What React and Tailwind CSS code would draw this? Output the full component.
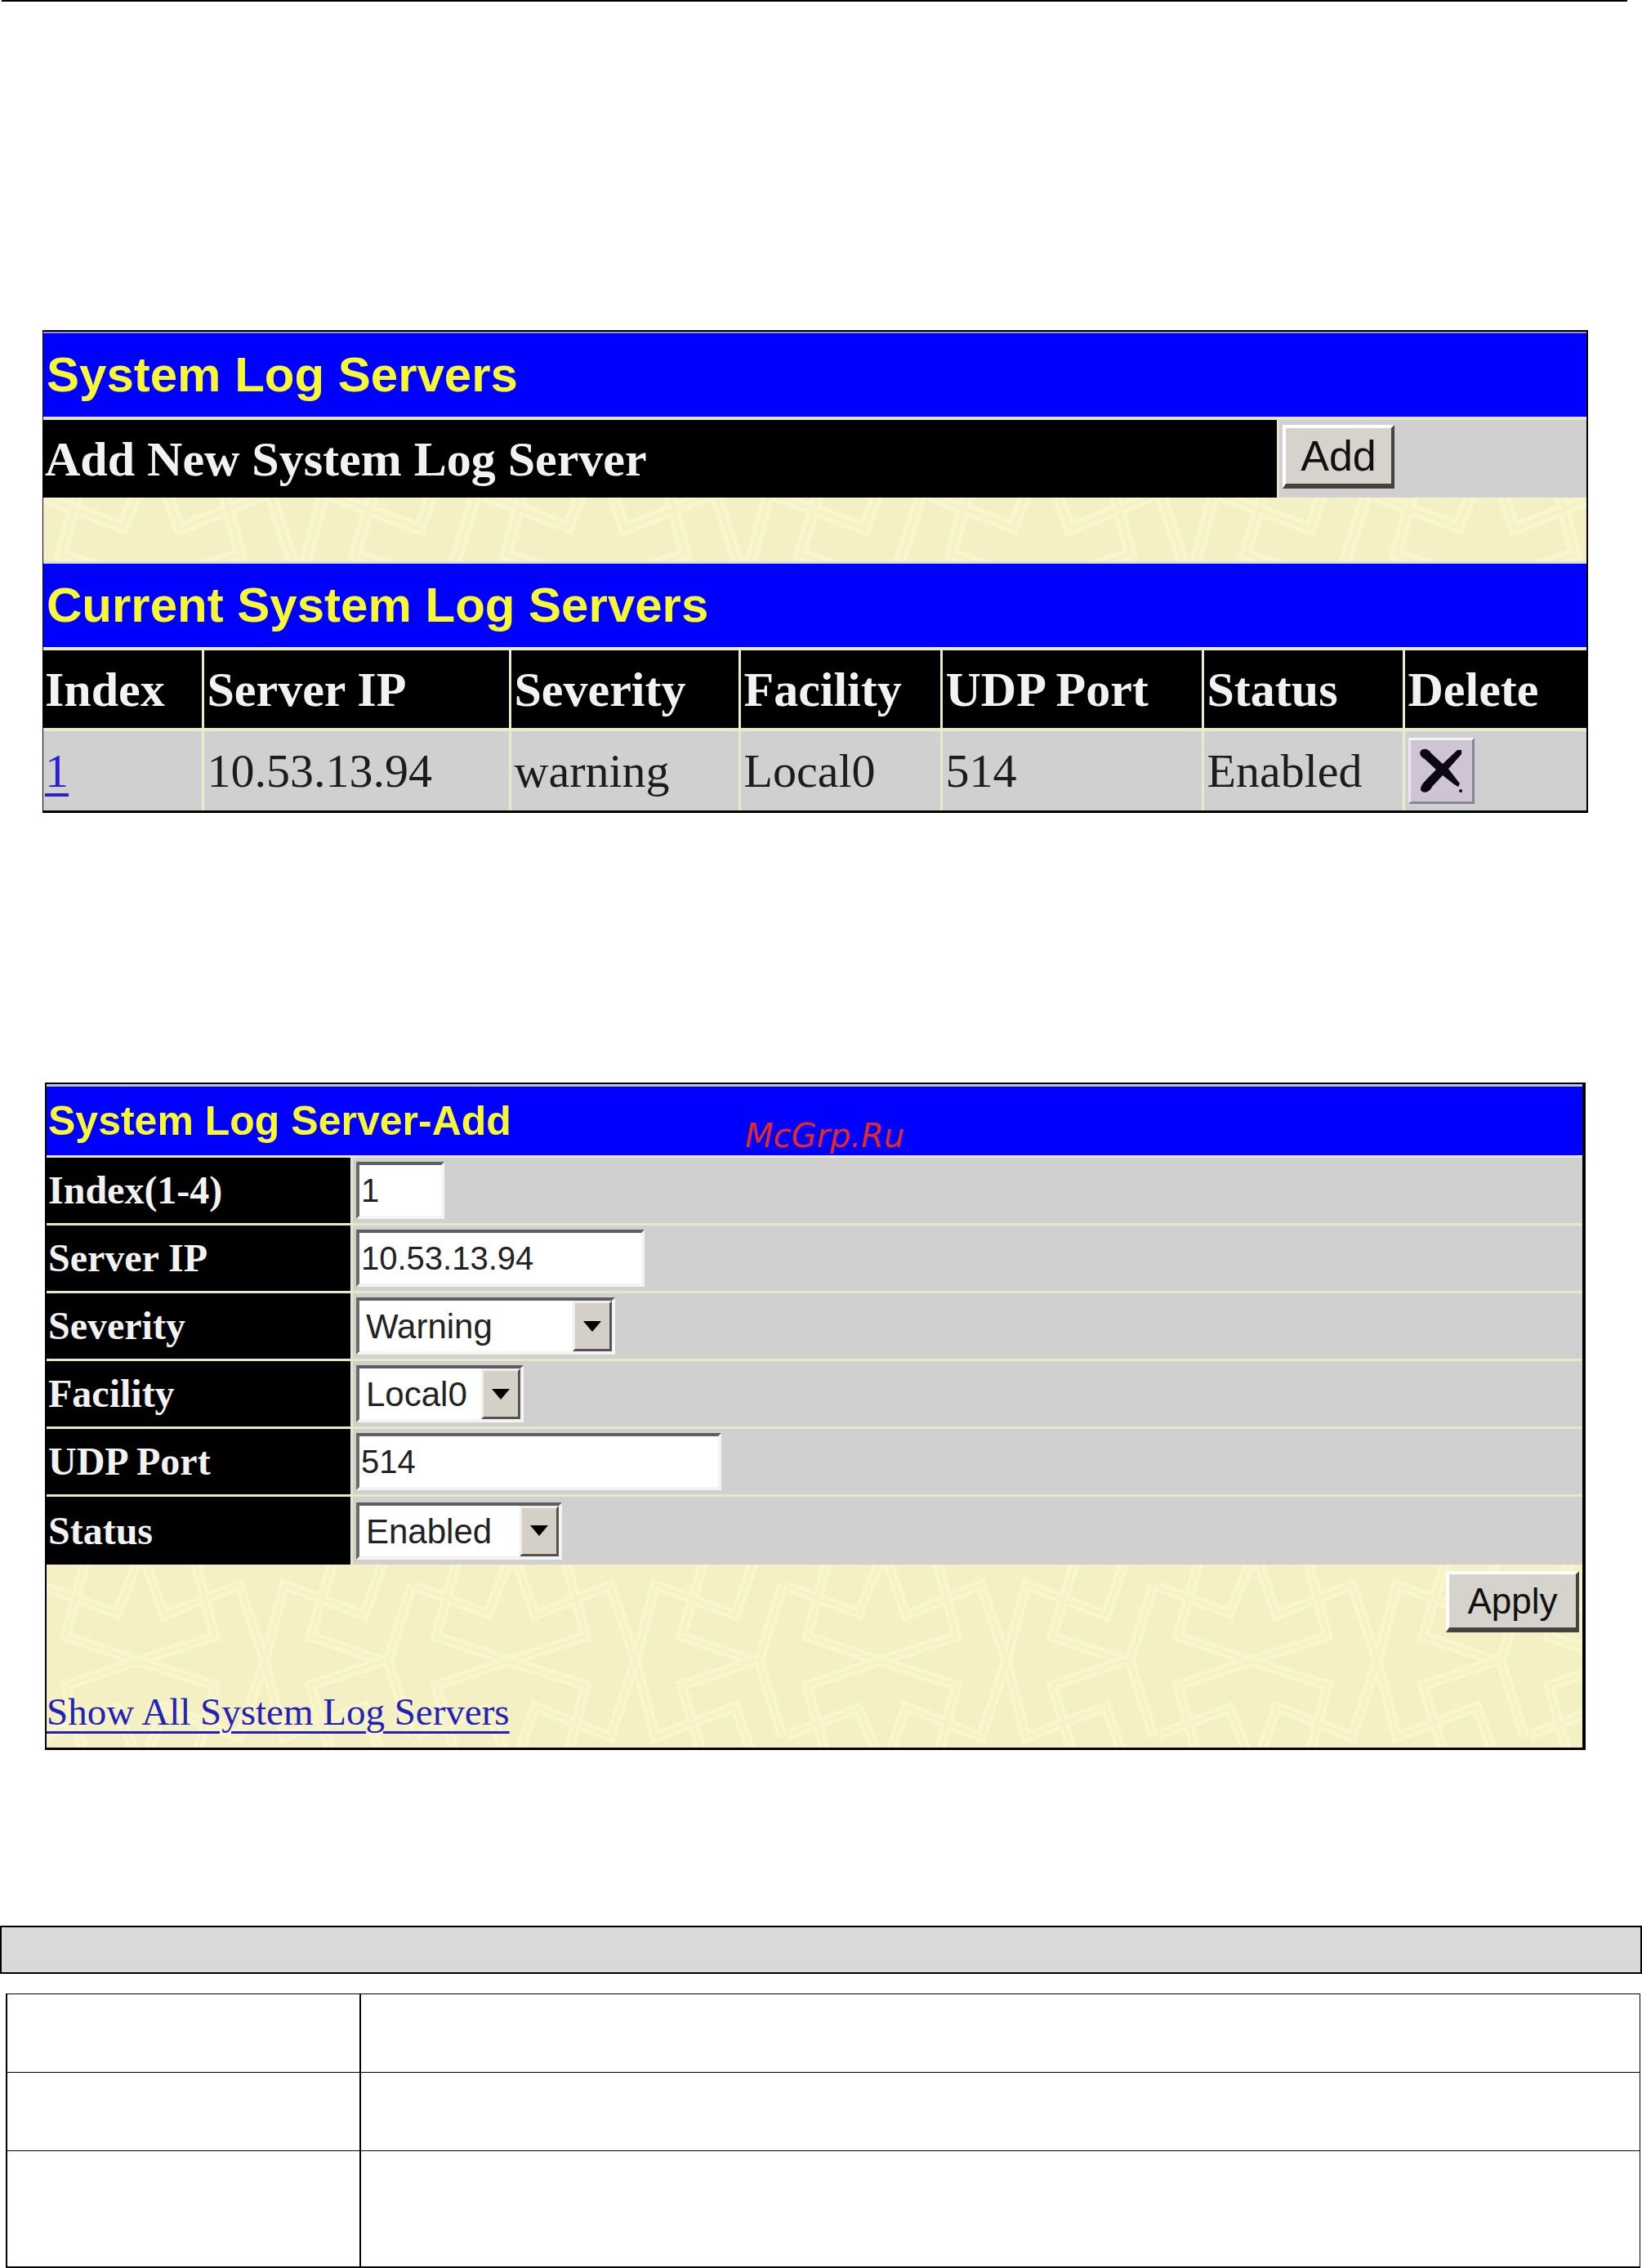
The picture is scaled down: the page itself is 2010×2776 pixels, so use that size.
import { useId, useState } from 'react'
import clsx from 'clsx'

const SERIF = "font-['Liberation_Serif','Times_New_Roman',serif]"
const SANS = "font-['Liberation_Sans',Arial,sans-serif]"

const servers = [
  {
    index: 1,
    ip: '10.53.13.94',
    severity: 'warning',
    facility: 'Local0',
    port: 514,
    status: 'Enabled',
  },
]

const columns = [
  { name: 'Index', width: 'w-[195px]' },
  { name: 'Server IP', width: 'w-[376px]' },
  { name: 'Severity', width: 'w-[281px]' },
  { name: 'Facility', width: 'w-[247px]' },
  { name: 'UDP Port', width: 'w-[320px]' },
  { name: 'Status', width: 'w-[246px]' },
  { name: 'Delete', width: 'w-[224px]' },
]

// upper half of one wallpaper tile, the lower half is its mirror
const tileLines = [
  'M-7 25 L86 60 L112 -4',
  'M121 -4 L144 62 L236 25 L267 118',
  'M267 118 L291 25 L389 62 L412 -4',
  'M182 -4 L206 88 L112 118 L23 88 L48 -4',
  'M351 -4 L323 88 L412 118',
  'M447 25 L418 118',
]

function Wallpaper({ transform }) {
  const id = useId()

  const lines = tileLines.map(d => <path key={d} d={d} />)
  const half = (
    <>
      <g stroke="#faf6cb" strokeWidth="13">{lines}</g>
      <g stroke="#f6f1c6" strokeWidth="4">{lines}</g>
    </>
  )

  return (
    <svg className="absolute inset-0 size-full" aria-hidden="true">
      <defs>
        <pattern
          id={id}
          width="454"
          height="236"
          patternUnits="userSpaceOnUse"
          patternTransform={transform}
        >
          <rect width="454" height="236" fill="#f5f0c4" />
          <g fill="none" strokeLinejoin="miter">
            {half}
            <g transform="translate(0 236) scale(1 -1)">{half}</g>
          </g>
        </pattern>
      </defs>
      <rect width="100%" height="100%" fill={`url(#${id})`} />
    </svg>
  )
}

function RaisedButton({ className, children }) {
  return (
    <button
      type="button"
      className={clsx(
        'border-4 border-b-[6px] border-t-white border-l-white border-r-[#45433f] border-b-[#45433f] bg-[#d6d3cc] leading-none text-[#111]',
        SANS,
        className
      )}
    >
      {children}
    </button>
  )
}

const sunken =
  'h-[70px] border-4 border-t-[#5e5e5e] border-l-[#6a6a6a] border-r-[#f4f4f2] border-b-[#f4f4f2] bg-white text-[#222] rounded-none outline-none'

function TextField({ id, value, onChange, width }) {
  return (
    <input
      id={id}
      type="text"
      value={value}
      onChange={e => onChange(e.target.value)}
      className={clsx('block px-0.5 text-[40px]', sunken, SANS, width)}
    />
  )
}

function SelectField({ id, value, onChange, options, width }) {
  return (
    <div className={clsx('relative', width)}>
      <select
        id={id}
        value={value}
        onChange={e => onChange(e.target.value)}
        className={clsx('block w-full appearance-none pl-2 text-[42px]', sunken, SANS)}
      >
        {options.map(o => (
          <option key={o}>{o}</option>
        ))}
      </select>
      <span className="pointer-events-none absolute top-1 right-1 bottom-1 flex w-12 items-center justify-center border-3 border-t-[#f0eee8] border-l-[#f0eee8] border-r-[#55534e] border-b-[#55534e] bg-[#d4d0c8]">
        <svg width="22" height="13" viewBox="0 0 22 13" aria-hidden="true">
          <path d="M0 0 H22 L11 13 Z" fill="#000" />
        </svg>
      </span>
    </div>
  )
}

function FormRow({ id, label, last, children }) {
  return (
    <div
      className={clsx(
        'flex h-[83px] bg-[#d0d0d0]',
        !last && 'border-b-3 border-[#e9e8c6]'
      )}
    >
      <label
        htmlFor={id}
        className="flex w-[375px] shrink-0 items-center border-r-3 border-[#e9e8c6] bg-black pl-0.5 text-5xl font-bold text-[#f2f2f2]"
      >
        {label}
      </label>
      <div className="flex items-center pl-1">{children}</div>
    </div>
  )
}

function ServerList() {
  return (
    <section className="border-2 border-b-3 border-l-1 border-black bg-[#f5f0c4]">
      <h2
        className={clsx(
          'flex h-[104px] items-center border-t-2 border-[#8f8fd8] bg-[#0000ff] pl-1 text-[60px] font-bold text-[#f7f732]',
          SANS
        )}
      >
        System Log Servers
      </h2>

      <div className="flex h-[99px] border-t-4 border-[#e8e2cc] bg-[#d0d0d0]">
        <p className="flex flex-1 items-center bg-black pl-0.5 text-[60px] font-bold text-[#f2f2f2]">
          Add New System Log Server
        </p>
        <div className="w-[379px] border-l-3 border-[#e8e2cc] pt-1.5 pl-1">
          <RaisedButton className="h-[78px] w-[137px] text-[52px]">
            Add
          </RaisedButton>
        </div>
      </div>

      <div className="relative h-[78px]">
        <Wallpaper transform="translate(-6 -36) scale(1.2)" />
      </div>

      <h2
        className={clsx(
          'flex h-[105px] items-center border-t-3 border-[#dcdcf0] bg-[#0000ff] pl-1 text-[60px] font-bold text-[#f7f732]',
          SANS
        )}
      >
        Current System Log Servers
      </h2>

      <table className="w-full table-fixed border-collapse text-left">
        <thead>
          <tr className="h-[99px] border-t-4 border-[#ecebc8] bg-black text-[60px] text-[#f2f2f2]">
            {columns.map(c => (
              <th
                key={c.name}
                className={clsx(
                  'border-l-3 border-[#ecebc8] py-0 pr-0 pl-1 leading-none font-bold whitespace-nowrap first:border-l-0 first:pl-0.5',
                  c.width
                )}
              >
                {c.name}
              </th>
            ))}
          </tr>
        </thead>
        <tbody>
          {servers.map(s => (
            <tr
              key={s.index}
              className="h-[99px] border-t-4 border-[#ecebc8] bg-[#d0d0d0] text-[58px] leading-none text-[#1c1c1c] [&>td]:border-l-3 [&>td]:border-[#ecebc8] [&>td]:pl-1 [&>td:first-child]:border-l-0 [&>td:first-child]:pl-0.5"
            >
              <td>
                <a
                  href="#edit"
                  className="text-[#2a20d0] underline decoration-4 underline-offset-8"
                >
                  {s.index}
                </a>
              </td>
              <td>{s.ip}</td>
              <td>{s.severity}</td>
              <td>{s.facility}</td>
              <td>{s.port}</td>
              <td>{s.status}</td>
              <td>
                <button
                  type="button"
                  aria-label="Delete server"
                  className="block size-[81px] border-3 border-t-[#f6f2f8] border-l-[#ece6ee] border-r-[#8c8494] border-b-[#8c8494] bg-[#cfc4d4]"
                >
                  <svg viewBox="0 0 75 75" className="size-full" aria-hidden="true">
                    <path
                      d="M12 13 C16 9 22 11 25 16 L39 29 L57 12 L62 12 L62 17 L46 35 L60 53 L58 57 L53 54 L39 43 L26 57 C23 64 15 66 12 61 C12 54 17 51 20 47 L31 36 L17 23 C12 20 10 17 12 13 Z"
                      fill="#0c0614"
                    />
                    <circle cx="61" cy="62" r="2" fill="#0c0614" />
                  </svg>
                </button>
              </td>
            </tr>
          ))}
        </tbody>
      </table>
    </section>
  )
}

function ServerForm() {
  const [form, setForm] = useState({
    index: '1',
    ip: '10.53.13.94',
    severity: 'Warning',
    facility: 'Local0',
    port: '514',
    status: 'Enabled',
  })

  const bind = key => ({
    id: key,
    value: form[key],
    onChange: value => setForm(prev => ({ ...prev, [key]: value })),
  })

  return (
    <form className="border-2 border-r-4 border-b-3 border-black bg-[#f5f0c4]">
      <div className="relative flex h-[87px] items-center border-t-3 border-[#c4c4e4] bg-[#0000ff] pl-0.5">
        <h2 className={clsx('text-[50px] font-bold text-[#f7f732]', SANS)}>
          System Log Server-Add
        </h2>
        <span className="absolute bottom-1 left-[855px] font-['DejaVu_Sans','Verdana',sans-serif] text-[40px] leading-none text-[#e02a24] italic">
          McGrp.Ru
        </span>
      </div>

      <div className="border-t-3 border-[#e9e4d4]">
        <FormRow id="index" label="Index(1-4)">
          <TextField {...bind('index')} width="w-[108px]" />
        </FormRow>
        <FormRow id="ip" label="Server IP">
          <TextField {...bind('ip')} width="w-[353px]" />
        </FormRow>
        <FormRow id="severity" label="Severity">
          <SelectField
            {...bind('severity')}
            options={['Warning', 'Informational', 'All']}
            width="w-[317px]"
          />
        </FormRow>
        <FormRow id="facility" label="Facility">
          <SelectField
            {...bind('facility')}
            options={['Local0', 'Local1', 'Local2', 'Local3']}
            width="w-[205px]"
          />
        </FormRow>
        <FormRow id="port" label="UDP Port">
          <TextField {...bind('port')} width="w-[447px]" />
        </FormRow>
        <FormRow id="status" label="Status" last>
          <SelectField
            {...bind('status')}
            options={['Enabled', 'Disabled']}
            width="w-[252px]"
          />
        </FormRow>
      </div>

      <div className="relative h-56">
        <Wallpaper />
        <div className="relative flex h-full flex-col justify-between pt-2 pb-5">
          <div className="flex justify-end pr-1">
            <RaisedButton className="h-[75px] w-[163px] text-[44px]">
              Apply
            </RaisedButton>
          </div>
          <a
            href="#servers"
            className="self-start text-[47px] leading-none text-[#2222b8] underline decoration-3 underline-offset-8"
          >
            Show All System Log Servers
          </a>
        </div>
      </div>
    </form>
  )
}

export default function App() {
  return (
    <main className={clsx('bg-white', SERIF)}>
      <div className="mr-[18px] ml-0.5 h-0.5 bg-black" />

      <div className="pt-[402px] pr-[66px] pl-[52px]">
        <ServerList />
      </div>

      <div className="pt-[330px] pr-[69px] pl-[55px]">
        <ServerForm />
      </div>

      <div className="mt-[215px] h-[59px] border-2 border-black bg-[#d9d9d9]" />

      <div className="pt-6 pr-0.5 pl-[7px]">
        <table className="w-full table-fixed border-collapse border border-b-2 border-l-2 border-black">
          <tbody>
            <tr className="h-24 border-b border-black">
              <td className="w-[433px] border-r-2 border-black" />
              <td />
            </tr>
            <tr className="h-24 border-b border-black">
              <td className="border-r-2 border-black" />
              <td />
            </tr>
            <tr className="h-[142px]">
              <td className="border-r-2 border-black" />
              <td />
            </tr>
          </tbody>
        </table>
      </div>
    </main>
  )
}
